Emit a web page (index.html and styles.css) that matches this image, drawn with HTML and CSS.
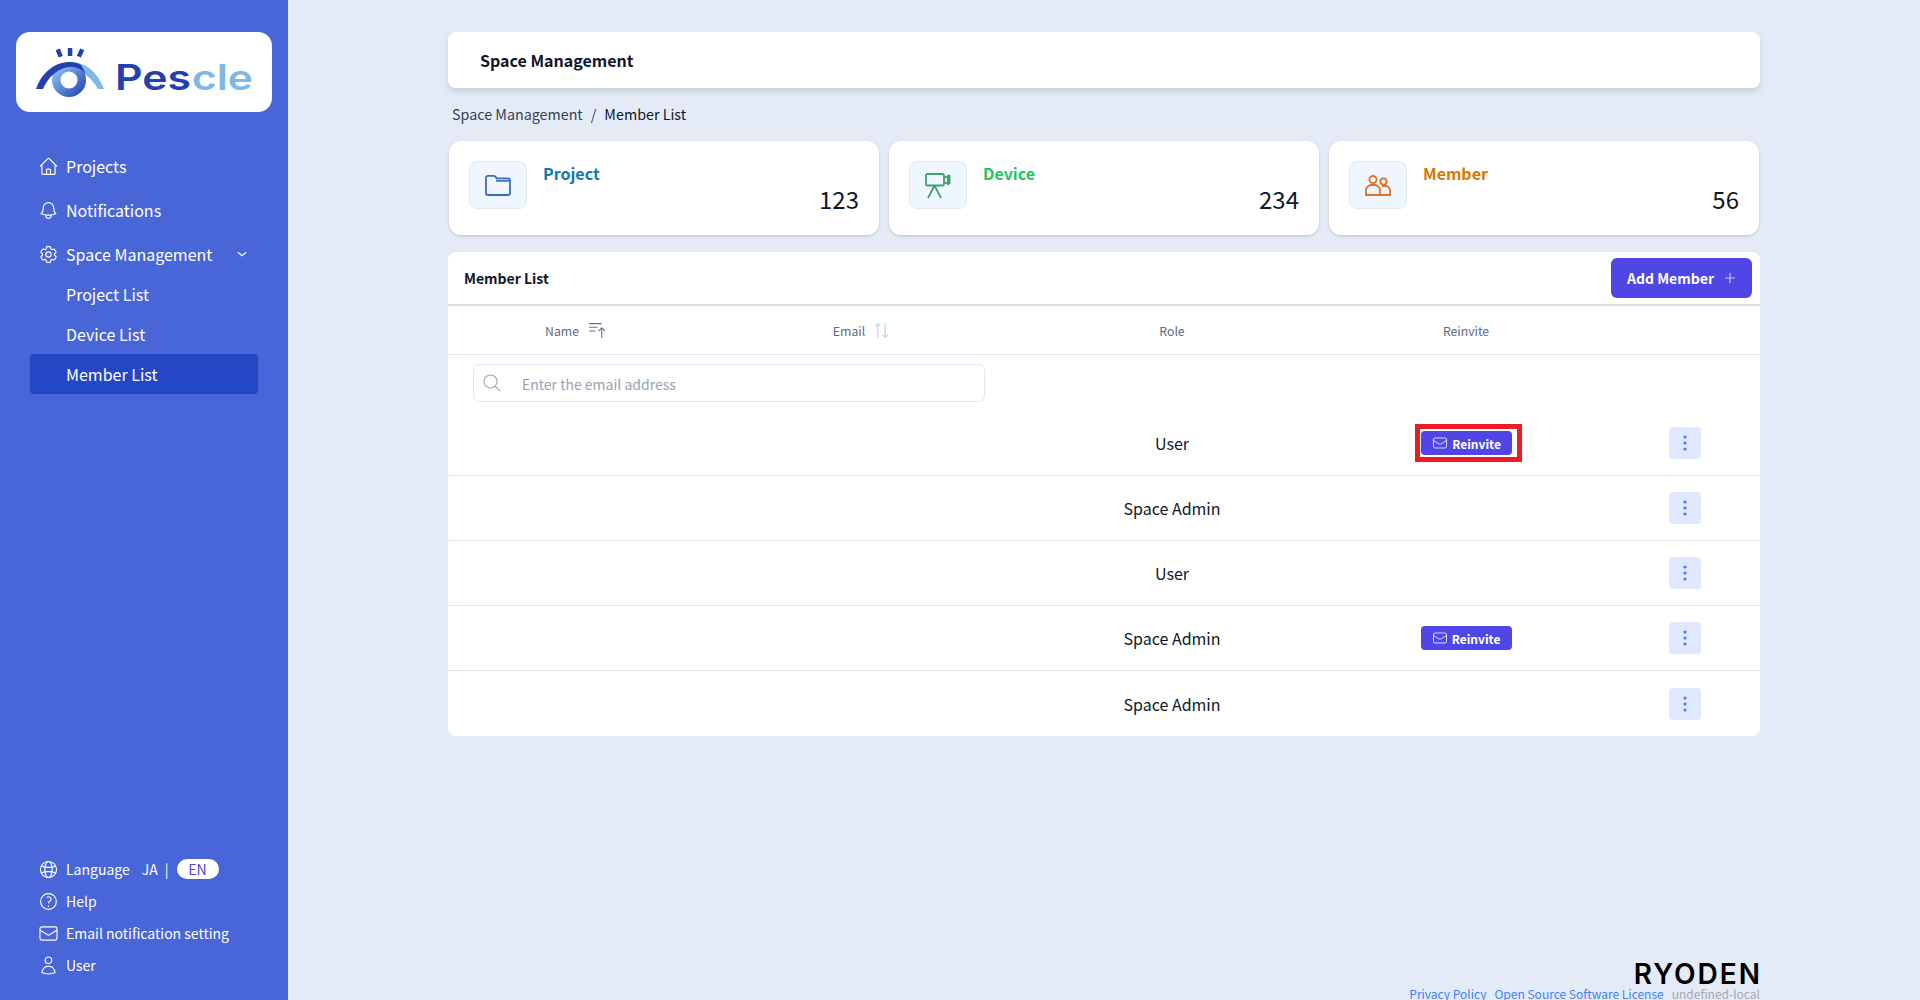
FILE: index.html
```html
<!DOCTYPE html>
<html lang="en">

<head>
  <meta charset="UTF-8">
  <meta name="viewport" content="width=device-width, initial-scale=1.0">
  <title>Member List</title>
  <link rel="stylesheet" href="styles.css">
</head>

<body>
  <svg class="icon-defs" width="0" height="0">
    <symbol id="i-home" viewBox="0 0 24 24"><path d="m2.25 12 8.954-8.955c.44-.439 1.152-.439 1.591 0L21.75 12M4.5 9.75v10.125c0 .621.504 1.125 1.125 1.125H9.75v-4.875c0-.621.504-1.125 1.125-1.125h2.25c.621 0 1.125.504 1.125 1.125V21h4.125c.621 0 1.125-.504 1.125-1.125V9.75M8.25 21h8.25"/></symbol>
    <symbol id="i-bell" viewBox="0 0 24 24"><path d="M14.857 17.082a23.848 23.848 0 0 0 5.454-1.31A8.967 8.967 0 0 1 18 9.75V9A6 6 0 0 0 6 9v.75a8.967 8.967 0 0 1-2.312 6.022c1.733.64 3.56 1.085 5.455 1.31m5.714 0a24.255 24.255 0 0 1-5.714 0m5.714 0a3 3 0 1 1-5.714 0"/></symbol>
    <symbol id="i-cog" viewBox="0 0 24 24"><path d="M9.594 3.94c.09-.542.56-.94 1.11-.94h2.593c.55 0 1.02.398 1.11.94l.213 1.281c.063.374.313.686.645.87.074.04.147.083.22.127.325.196.72.257 1.075.124l1.217-.456a1.125 1.125 0 0 1 1.37.49l1.296 2.247a1.125 1.125 0 0 1-.26 1.431l-1.003.827c-.293.241-.438.613-.43.992a7.723 7.723 0 0 1 0 .255c-.008.378.137.75.43.991l1.004.827c.424.35.534.955.26 1.43l-1.298 2.247a1.125 1.125 0 0 1-1.369.491l-1.217-.456c-.355-.133-.75-.072-1.076.124a6.47 6.47 0 0 1-.22.128c-.331.183-.581.495-.644.869l-.213 1.281c-.09.543-.56.94-1.11.94h-2.594c-.55 0-1.019-.398-1.11-.94l-.213-1.281c-.062-.374-.312-.686-.644-.87a6.52 6.52 0 0 1-.22-.127c-.325-.196-.72-.257-1.076-.124l-1.217.456a1.125 1.125 0 0 1-1.369-.49l-1.297-2.247a1.125 1.125 0 0 1 .26-1.431l1.004-.827c.292-.24.437-.613.43-.991a6.932 6.932 0 0 1 0-.255c.007-.38-.138-.751-.43-.992l-1.004-.827a1.125 1.125 0 0 1-.26-1.43l1.297-2.247a1.125 1.125 0 0 1 1.37-.491l1.216.456c.356.133.751.072 1.076-.124.072-.044.146-.086.22-.128.332-.183.582-.495.644-.869l.214-1.28Z"/><path d="M15 12a3 3 0 1 1-6 0 3 3 0 0 1 6 0Z"/></symbol>
    <symbol id="i-globe" viewBox="0 0 24 24"><circle cx="12" cy="12" r="9.2"/><ellipse cx="12" cy="12" rx="4.2" ry="9.2"/><path d="M3.6 8.2c5 1.6 11.8 1.6 16.8 0M3.6 15.8c5-1.6 11.8-1.6 16.8 0"/></symbol>
    <symbol id="i-help" viewBox="0 0 24 24"><path d="M9.879 7.519c1.171-1.025 3.071-1.025 4.242 0 1.172 1.025 1.172 2.687 0 3.712-.203.179-.43.326-.67.442-.745.361-1.45.999-1.45 1.827v.75M21 12a9 9 0 1 1-18 0 9 9 0 0 1 18 0Zm-9 5.25h.008v.008H12v-.008Z"/></symbol>
    <symbol id="i-mail" viewBox="0 0 24 24"><path d="M21.75 6.75v10.5a2.25 2.25 0 0 1-2.25 2.25h-15a2.25 2.25 0 0 1-2.25-2.25V6.75m19.5 0A2.25 2.25 0 0 0 19.5 4.5h-15a2.25 2.25 0 0 0-2.25 2.25m19.5 0v.243a2.25 2.25 0 0 1-1.07 1.916l-7.5 4.615a2.25 2.25 0 0 1-2.36 0L3.32 8.91a2.25 2.25 0 0 1-1.07-1.916V6.75"/></symbol>
    <symbol id="i-user" viewBox="0 0 24 24"><path d="M15.75 6a3.75 3.75 0 1 1-7.5 0 3.75 3.75 0 0 1 7.5 0ZM4.501 20.118a7.5 7.5 0 0 1 14.998 0A17.933 17.933 0 0 1 12 21.75c-2.676 0-5.216-.584-7.499-1.632Z"/></symbol>
    <symbol id="i-dots" viewBox="0 0 24 24"><circle cx="12" cy="6" r="1.6"/><circle cx="12" cy="12" r="1.6"/><circle cx="12" cy="18" r="1.6"/></symbol>
  </svg>

  <div class="layout">
    <aside class="sidebar">
      <div class="logo-box">
        <svg width="256" height="80" viewBox="0 0 256 80">
          <defs>
            <linearGradient id="ringGrad" x1="0" y1="0" x2="1" y2="1">
              <stop offset="0" stop-color="#8fc4ee" />
              <stop offset="1" stop-color="#2b4cb8" />
            </linearGradient>
          </defs>
          <rect x="41" y="17" width="4.500" height="8" fill="#2340b0" transform="rotate(-22 43.300 21)" />
          <rect x="51.800" y="16" width="4.500" height="8" fill="#2340b0" />
          <rect x="62.300" y="17" width="4.500" height="8" fill="#2340b0" transform="rotate(25 64.500 21)" />
          <path d="M54 30C70 30 82 41 88 57H82C76 46 66 38 54 37Z" fill="#7db8ea" />
          <circle cx="53" cy="48" r="12.800" fill="none" stroke="url(#ringGrad)" stroke-width="8.500" />
          <path d="M20 57C26 40 39 30 54 30C58 30 62 31 65 33L70 42C66 37 60 34.500 53 35C42 36 32 45 27 57Z" fill="#2340b0" />
          <text class="logo-text" x="99" y="58" fill="#2340b0" textLength="76" lengthAdjust="spacingAndGlyphs">Pes</text>
          <text class="logo-text" x="176" y="58" fill="#7db8ea" textLength="61" lengthAdjust="spacingAndGlyphs">cle</text>
        </svg>
      </div>

      <nav class="nav">
        <a class="nav-item"><svg class="nav-icon"><use href="#i-home" /></svg>Projects</a>
        <a class="nav-item"><svg class="nav-icon"><use href="#i-bell" /></svg>Notifications</a>
        <a class="nav-item">
          <svg class="nav-icon"><use href="#i-cog" /></svg>Space Management
          <svg class="nav-chevron" viewBox="0 0 24 24"><path d="m5 9 7 6 7-6" /></svg>
        </a>
        <a class="nav-sub">Project List</a>
        <a class="nav-sub">Device List</a>
        <a class="nav-sub active">Member List</a>
      </nav>

      <div class="side-bottom">
        <div class="side-item">
          <svg class="nav-icon"><use href="#i-globe" /></svg>Language
          <span class="lang-ja">JA</span><span class="lang-sep">|</span><span class="lang-en">EN</span>
        </div>
        <div class="side-item"><svg class="nav-icon"><use href="#i-help" /></svg>Help</div>
        <div class="side-item"><svg class="nav-icon"><use href="#i-mail" /></svg>Email notification setting</div>
        <div class="side-item"><svg class="nav-icon"><use href="#i-user" /></svg>User</div>
      </div>
    </aside>

    <main class="main">
      <div class="title-bar">Space Management</div>

      <div class="breadcrumb">
        <span class="crumb-parent">Space Management</span>
        <span class="crumb-sep">/</span>
        <span>Member List</span>
      </div>

      <section class="stats">
        <div class="stat-card">
          <div class="stat-icon">
            <svg width="26" height="22" viewBox="0 0 26 22" fill="none" stroke="#3b6cb8" stroke-width="1.800">
              <path d="M1 19V4c0-1.400 1-2.200 2.200-2.200h5.600c.8 0 1.200.4 1.700 1l1.200 1.500H22.800c1.300 0 2.200.9 2.200 2.200V19c0 1.200-.9 2-2.200 2H3.200C1.900 21 1 20.200 1 19Z" />
              <path d="M11 6.800h14" />
            </svg>
          </div>
          <div class="stat-body">
            <div class="stat-label label-project">Project</div>
            <div class="stat-num">123</div>
          </div>
        </div>
        <div class="stat-card">
          <div class="stat-icon">
            <svg width="26" height="25" viewBox="0 0 26 25" fill="none" stroke="#3fa06a" stroke-width="1.800">
              <rect x="1" y="1" width="18" height="11.500" rx="1.500" />
              <path d="M19 5l4-2v8l-4-2M24.500 2v9" />
              <path d="M9.500 12.500 3 25M9.500 12.500 16 25" />
            </svg>
          </div>
          <div class="stat-body">
            <div class="stat-label label-device">Device</div>
            <div class="stat-num">234</div>
          </div>
        </div>
        <div class="stat-card">
          <div class="stat-icon">
            <svg width="26" height="21" viewBox="0 0 26 21" fill="none" stroke="#e0702c" stroke-width="1.800">
              <circle cx="8" cy="4.600" r="3.600" />
              <circle cx="18.500" cy="6.500" r="3.200" />
              <path d="M1 20v-4.500C1 12.500 3.500 10 6.500 10h3c3 0 5.500 2.500 5.500 5.500V20ZM1 20h24v-4c0-2.800-2-5-4.500-5h-3.500" />
            </svg>
          </div>
          <div class="stat-body">
            <div class="stat-label label-member">Member</div>
            <div class="stat-num">56</div>
          </div>
        </div>
      </section>

      <section class="list-card">
        <div class="list-head">
          <span class="list-title">Member List</span>
          <button class="btn-add">Add Member
            <svg width="12" height="12" viewBox="0 0 12 12" fill="none" stroke="#c9c6f7" stroke-width="1.200"><path d="M6 1v10M1 6h10" /></svg>
          </button>
        </div>

        <div class="row-grid col-head">
          <div class="col-cell col-name">Name
            <svg class="sort-icon" width="19" height="17" viewBox="0 0 18 16" fill="none" stroke="#64748b" stroke-width="1"><path d="M1 1.500h12M1 5h8M1 8.500h6M13 15V5.500M10 8.500l3-3 3 3" /></svg>
          </div>
          <div class="col-cell">Email
            <svg class="sort-icon" width="15" height="17" viewBox="0 0 14 16" fill="none" stroke="#cbd5e1" stroke-width="1.200"><path d="M3.500 15V1.500M1 4l2.500-2.500L6 4M10.500 1v13.500M8 12l2.500 2.500L13 12" /></svg>
          </div>
          <div class="col-cell">Role</div>
          <div class="col-cell">Reinvite</div>
        </div>

        <div class="search-row">
          <div class="search-box">
            <svg width="18" height="18" viewBox="0 0 18 18" fill="none" stroke="#94a3b8" stroke-width="1.100"><circle cx="7.500" cy="7.500" r="6.500" /><path d="m12.200 12.200 5 5" /></svg>
            <span class="search-text">Enter the email address</span>
          </div>
        </div>

        <div class="row-grid member-row first-row">
          <div></div><div></div>
          <div class="role">User</div>
          <div class="cell-center">
            <span class="highlight">
              <button class="btn-reinvite"><svg class="mail-icon"><use href="#i-mail" /></svg>Reinvite</button>
            </span>
          </div>
          <div class="cell-center"><button class="btn-more"><svg class="dots"><use href="#i-dots" /></svg></button></div>
        </div>
        <div class="row-grid member-row">
          <div></div><div></div>
          <div class="role">Space Admin</div>
          <div></div>
          <div class="cell-center"><button class="btn-more"><svg class="dots"><use href="#i-dots" /></svg></button></div>
        </div>
        <div class="row-grid member-row">
          <div></div><div></div>
          <div class="role">User</div>
          <div></div>
          <div class="cell-center"><button class="btn-more"><svg class="dots"><use href="#i-dots" /></svg></button></div>
        </div>
        <div class="row-grid member-row">
          <div></div><div></div>
          <div class="role">Space Admin</div>
          <div class="cell-center">
            <button class="btn-reinvite"><svg class="mail-icon"><use href="#i-mail" /></svg>Reinvite</button>
          </div>
          <div class="cell-center"><button class="btn-more"><svg class="dots"><use href="#i-dots" /></svg></button></div>
        </div>
        <div class="row-grid member-row last-row">
          <div></div><div></div>
          <div class="role">Space Admin</div>
          <div></div>
          <div class="cell-center"><button class="btn-more"><svg class="dots"><use href="#i-dots" /></svg></button></div>
        </div>
      </section>

      <footer class="footer">
        <div class="ryoden">RYODEN</div>
        <div class="footer-links">
          <a>Privacy Policy</a>
          <a>Open Source Software License</a>
          <span class="env">undefined-local</span>
        </div>
      </footer>
    </main>
  </div>
</body>

</html>
```

FILE: styles.css
```css
* {
  margin: 0;
  padding: 0;
  box-sizing: border-box;
}

body {
  height: 1000px;
  overflow: hidden;
  background-color: #e5ebf6;
  font-family: "Noto Sans CJK JP", "Noto Sans", sans-serif;
  color: #0f172a;
}

.icon-defs {
  display: block;
  height: 0;
}

.layout {
  display: flex;
  height: 1000px;
}

/* sidebar */
.sidebar {
  display: flex;
  flex-direction: column;
  width: 288px;
  flex-shrink: 0;
  padding: 32px 16px 0;
  background-color: #4866d8;
  color: #fff;
}

.logo-box {
  height: 80px;
  background-color: #fff;
  border-radius: 14px;
}

.logo-text {
  font-family: Inter, sans-serif;
  font-size: 35px;
  font-weight: 600;
}

.nav {
  display: flex;
  flex-direction: column;
  margin-top: 32px;
}

.nav-item {
  display: flex;
  align-items: center;
  height: 44px;
  padding-left: 22px;
  font-size: 16px;
}

.nav-icon {
  width: 21px;
  height: 21px;
  margin-right: 7px;
  fill: none;
  stroke: #fff;
  stroke-width: 1.3;
  flex-shrink: 0;
}

.nav-chevron {
  width: 14px;
  height: 14px;
  margin-left: 23px;
  fill: none;
  stroke: #fff;
  stroke-width: 2;
}

.nav-sub {
  display: flex;
  align-items: center;
  height: 40px;
  margin: 0 14px;
  padding-left: 36px;
  font-size: 16px;
  border-radius: 4px;
}

.nav-sub.active {
  background-color: #2447c6;
}

.nav-item + .nav-sub {
  margin-top: -2px;
}

.side-bottom {
  display: flex;
  flex-direction: column;
  margin-top: auto;
  padding: 0 0 19px 22px;
  font-size: 14px;
}

.side-item {
  display: flex;
  align-items: center;
  height: 32px;
}

.lang-ja {
  margin-left: 12px;
}

.lang-sep {
  margin: 0 8px 0 7px;
}

.lang-en {
  width: 42px;
  height: 20px;
  line-height: 20px;
  text-align: center;
  border-radius: 10px;
  background-color: #fff;
  color: #4f46e5;
}

/* main */
.main {
  display: flex;
  flex-direction: column;
  flex: 1;
  min-width: 0;
  padding: 32px 160px 0;
}

.title-bar {
  display: flex;
  align-items: center;
  height: 56px;
  padding-left: 32px;
  font-size: 16px;
  font-weight: 600;
  background-color: #fff;
  border-radius: 8px;
  box-shadow: 0 4px 6px rgba(15, 23, 42, 0.12);
}

.breadcrumb {
  display: flex;
  align-items: center;
  gap: 8px;
  height: 53px;
  padding: 0 0 2px 4px;
  font-size: 14.3px;
}

.crumb-parent,
.crumb-sep {
  color: #334155;
}

.stats {
  display: grid;
  grid-template-columns: repeat(3, 1fr);
  gap: 10px;
  padding: 0 1px;
}

.stat-card {
  display: flex;
  height: 94px;
  padding: 20px 20px 0;
  background-color: #fff;
  border-radius: 12px;
  box-shadow: 0 1px 3px rgba(15, 23, 42, 0.2);
}

.stat-icon {
  display: flex;
  align-items: center;
  justify-content: center;
  width: 58px;
  height: 48px;
  background-color: #eff6ff;
  border: 1px solid #e2e8f0;
  border-radius: 8px;
  flex-shrink: 0;
}

.stat-body {
  flex: 1;
  margin-left: 16px;
}

.stat-label {
  font-size: 16px;
  font-weight: 600;
  line-height: 24px;
}

.label-project {
  color: #0e7ab0;
}

.label-device {
  color: #22c55e;
}

.label-member {
  color: #d97706;
}

.stat-num {
  margin-top: -4px;
  font-size: 24px;
  line-height: 36px;
  text-align: right;
}

/* member table */
.list-card {
  margin-top: 17px;
  background-color: #fff;
  border-radius: 8px;
}

.list-head {
  display: flex;
  align-items: center;
  justify-content: space-between;
  height: 54px;
  padding: 0 8px 0 16px;
  border-bottom: 2px solid #d8dce3;
}

.list-title {
  font-size: 14px;
  font-weight: 600;
}

.btn-add {
  display: flex;
  align-items: center;
  justify-content: center;
  gap: 10px;
  width: 141px;
  height: 40px;
  border: none;
  border-radius: 6px;
  background-color: #4f46e5;
  color: #fff;
  font-family: inherit;
  font-size: 14px;
  font-weight: 600;
}

.row-grid {
  display: grid;
  grid-template-columns: 254px 318px 304px 284px 152px;
}

.col-head {
  align-items: center;
  height: 49px;
  padding-top: 2px;
  border-bottom: 1px solid #e2e8f0;
  font-size: 12.25px;
  color: #5b6b82;
}

.col-cell {
  display: flex;
  align-items: center;
  justify-content: center;
}

.col-name {
  padding-left: 2px;
}

.sort-icon {
  margin-left: 9px;
  margin-top: -2px;
}

.search-row {
  padding: 9px 0 0 25px;
}

.search-box {
  display: flex;
  align-items: center;
  width: 512px;
  height: 38px;
  padding-left: 9px;
  border: 1px solid #e2e8f0;
  border-radius: 6px;
}

.search-text {
  margin: 1px 0 0 21px;
  font-size: 14px;
  color: #94a3b8;
}

.member-row {
  align-items: center;
  height: 65px;
  border-bottom: 1px solid #e2e8f0;
}

.first-row {
  height: 74px;
  padding-top: 9px;
}

.last-row {
  border-bottom: none;
}

.role {
  text-align: center;
  font-size: 16px;
}

.cell-center {
  display: flex;
  align-items: center;
  justify-content: center;
}

.highlight {
  display: flex;
  margin-left: 5px;
  padding: 2px 5px 2px 1px;
  border: 5px solid #ed1c24;
}

.btn-reinvite {
  display: flex;
  align-items: center;
  justify-content: center;
  gap: 4px;
  width: 91px;
  height: 24px;
  border: none;
  border-radius: 4px;
  background-color: #4f46e5;
  color: #fff;
  font-family: inherit;
  font-size: 12px;
  font-weight: 600;
}

.mail-icon {
  width: 16px;
  height: 16px;
  fill: none;
  stroke: #fff;
  stroke-width: 1.2;
}

.btn-more {
  display: flex;
  align-items: center;
  justify-content: center;
  width: 32px;
  height: 32px;
  margin-left: 2px;
  border: none;
  border-radius: 4px;
  background-color: #e0e7ff;
}

.dots {
  width: 24px;
  height: 24px;
  fill: #3b82f6;
}

/* footer */
.footer {
  margin-top: auto;
  margin-bottom: -3px;
  text-align: right;
}

.ryoden {
  margin-right: -2px;
  font-family: Inter, sans-serif;
  font-size: 28px;
  font-weight: 600;
  line-height: 22px;
  letter-spacing: 2px;
  color: #000;
}

.footer-links {
  display: flex;
  justify-content: flex-end;
  gap: 8px;
  height: 18px;
  font-size: 12px;
  line-height: 18px;
  white-space: nowrap;
}

.footer-links a {
  color: #3b82f6;
  text-decoration: underline;
}

.env {
  color: #a3a9b3;
}
```
